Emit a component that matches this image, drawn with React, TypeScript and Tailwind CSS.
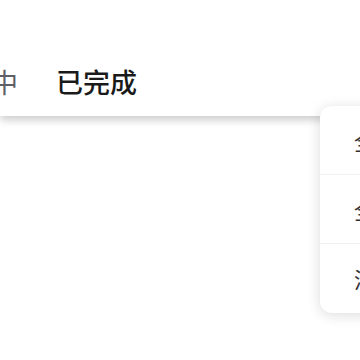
import React from "react";

export default function App() {
  const font = { fontFamily: '"Noto Sans CJK SC", "Noto Sans", sans-serif' };
  return (
    <div className="relative w-[360px] h-[360px] overflow-hidden bg-white" style={font}>
      <div className="h-[116px] bg-white flex items-center pt-[46px] shadow-[0_4px_8px_rgba(0,0,0,0.2)] relative z-10">
        <div className="flex items-center gap-[38px] ml-[-63px] text-[27px] leading-none">
          <span className="text-[#5f5f66]">进行中</span>
          <span className="text-[#1a1a1a] font-medium">已完成</span>
        </div>
      </div>
      <div className="absolute left-[320px] top-[106px] w-[200px] bg-white rounded-[12px] shadow-[0_2px_14px_rgba(0,0,0,0.14)] z-20">
        <div className="h-[69px] flex items-center pl-[34px] border-b border-[#f0f0f0] text-[22px] text-[#333]">全部标记</div>
        <div className="h-[69px] flex items-center pl-[34px] border-b border-[#f0f0f0] text-[22px] text-[#333]">全部删除</div>
        <div className="h-[69px] flex items-center pl-[34px] text-[22px] text-[#333]">清空列表</div>
      </div>
    </div>
  );
}
